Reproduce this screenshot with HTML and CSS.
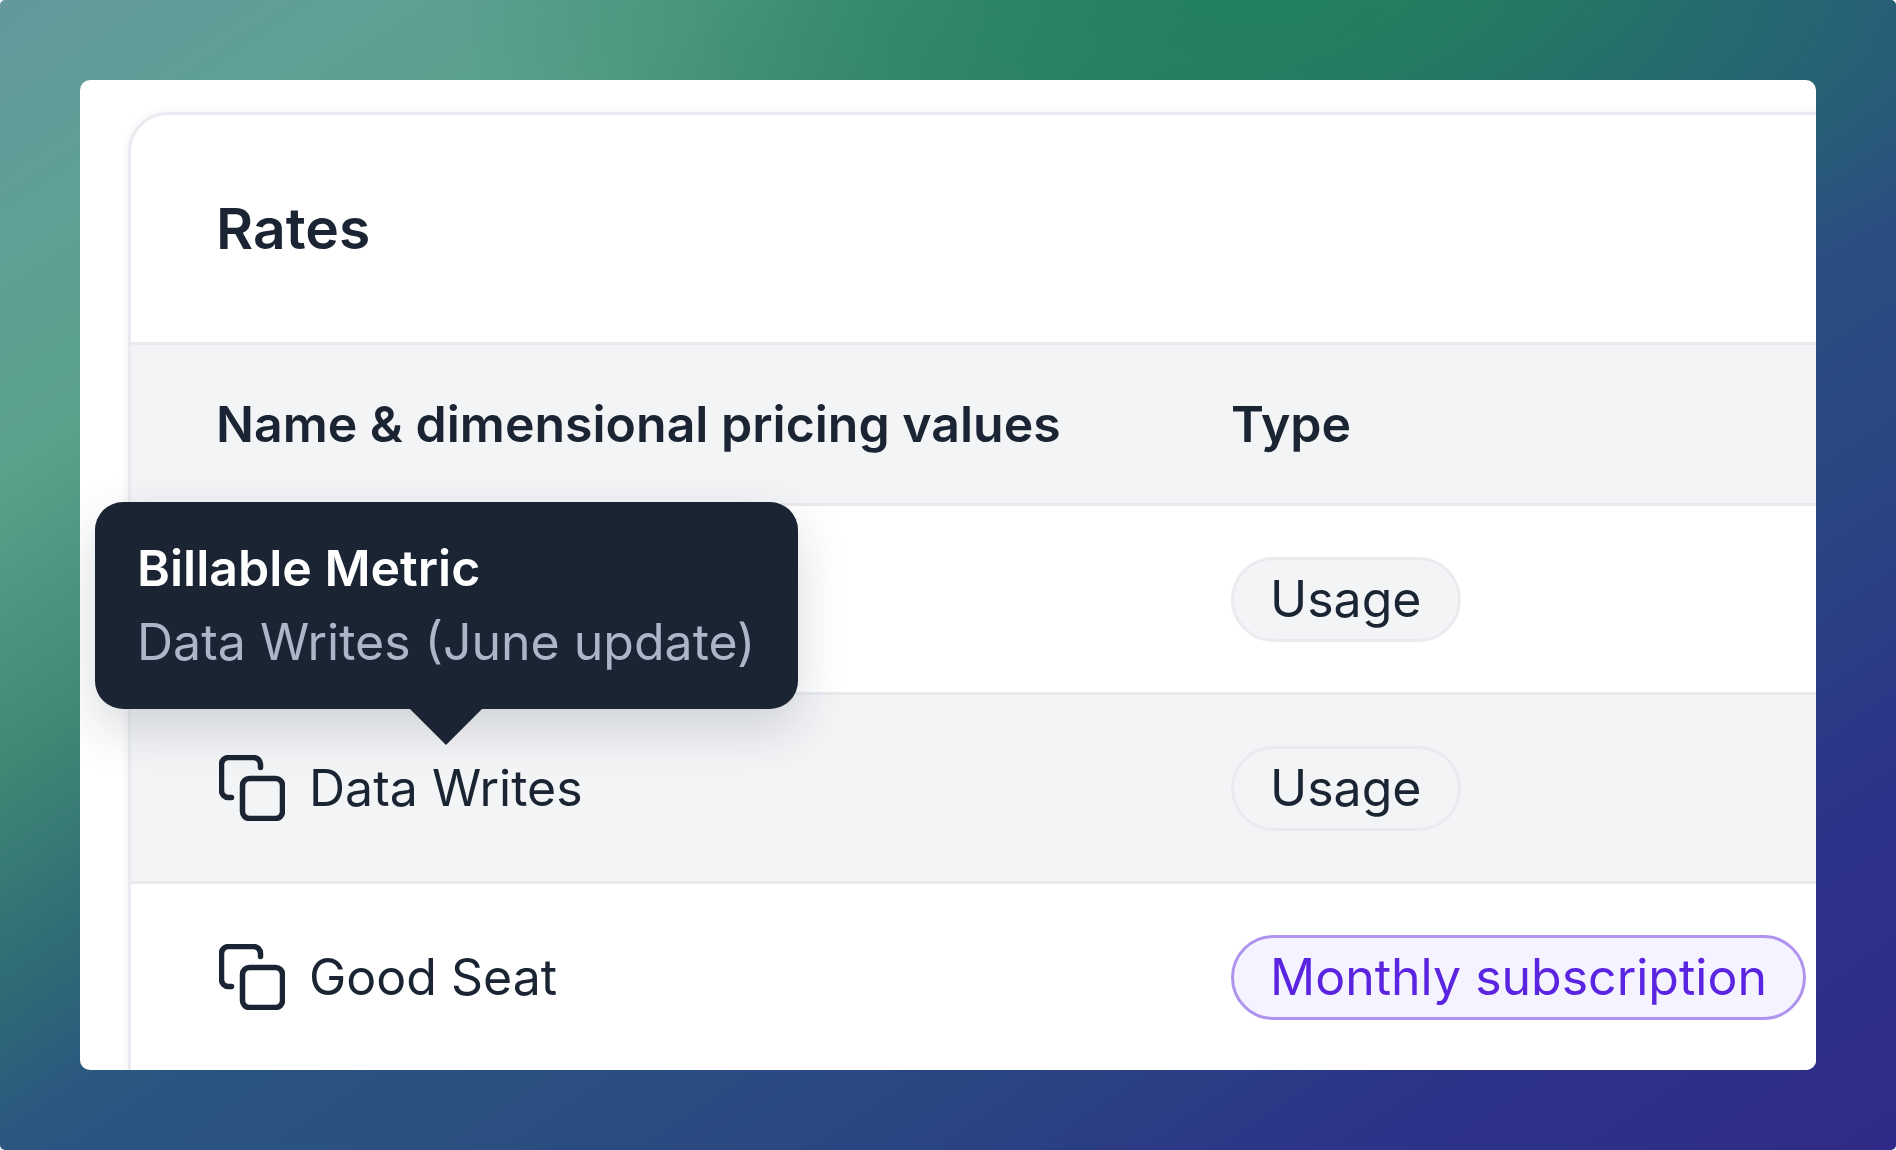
FILE: index.html
```html
<!DOCTYPE html>
<html lang="en">
<head>
<meta charset="utf-8">
<title>Rates</title>
<link rel="stylesheet" href="styles.css">
</head>
<body>
<main class="panel">
  <section class="card">
    <h2 class="card-title">Rates</h2>
    <div class="row row-head">
      <div class="col-name">Name &amp; dimensional pricing values</div>
      <div class="col-type">Type</div>
    </div>
    <div class="row row-body">
      <div class="col-type col-offset"><span class="pill">Usage</span></div>
    </div>
    <div class="row row-body row-alt">
      <div class="col-name name-cell">
        <svg class="icon" viewBox="0 0 66 66" fill="none"><path d="M41.5 12.5v-3a7 7 0 0 0-7-7h-25a7 7 0 0 0-7 7v26a7 7 0 0 0 7 7h3"/><rect x="23.5" y="23.5" width="40" height="40" rx="7"/></svg>
        <span>Data Writes</span>
      </div>
      <div class="col-type"><span class="pill">Usage</span></div>
    </div>
    <div class="row row-body">
      <div class="col-name name-cell">
        <svg class="icon" viewBox="0 0 66 66" fill="none"><path d="M41.5 12.5v-3a7 7 0 0 0-7-7h-25a7 7 0 0 0-7 7v26a7 7 0 0 0 7 7h3"/><rect x="23.5" y="23.5" width="40" height="40" rx="7"/></svg>
        <span>Good Seat</span>
      </div>
      <div class="col-type"><span class="pill pill-purple">Monthly subscription</span></div>
    </div>
  </section>
  <div class="tooltip">
    <div class="tooltip-title">Billable Metric</div>
    <div class="tooltip-sub">Data Writes (June update)</div>
  </div>
</main>
</body>
</html>
```
FILE: styles.css
```css
* { box-sizing: border-box; }
html { margin: 0; height: 100%; background: #fff; }
body {
  margin: 0; width: 1896px; height: 1150px; padding: 80px; overflow: hidden; border-radius: 5px;
  font-family: Inter, "Noto Sans", sans-serif; color: #1a2433;
  background:
    radial-gradient(820px 340px at 1270px 0, rgba(32,128,92,.95) 0%, rgba(32,128,92,.6) 45%, rgba(32,128,92,0) 100%),
    linear-gradient(146deg, #64989c 0%, #5fa096 10%, #5aa08a 20%, #3f8675 32%, #2f6a75 41%, #2a5680 47.3%, #2a4f80 60%, #2a4682 71%, #2c3488 84%, #2f2b88 100%);
}
.panel { position: relative; width: 1736px; height: 990px; background: #fff; border-radius: 10px; overflow: hidden; padding: 32px 0 0 48px; }
.card { width: 1800px; height: 1100px; background: #fff; border: 3px solid #e9ebf0; border-radius: 40px 0 0 0; box-shadow: -1px 0 8px rgba(30,40,60,.06); }
.card-title { margin: 0; height: 227px; padding-left: 85px; display: flex; align-items: center; font-size: 57px; font-weight: 600; }
.row { display: flex; align-items: center; border-bottom: 3px solid #e9ebef; }
.row-head { height: 164px; background: #f3f4f6; border-top: 3px solid #e9ebef; font-size: 50px; font-weight: 600; }
.row-body { height: 189px; font-size: 50px; }
.row-alt { background: #f3f4f6; }
.col-name { width: 1100px; padding-left: 85px; flex: none; }
.col-offset { margin-left: 1100px; }
.name-cell { display: flex; align-items: center; gap: 24px; padding-left: 88px; }
.icon { width: 66px; height: 66px; stroke: #1a2433; stroke-width: 5.5; stroke-linecap: round; stroke-linejoin: round; flex: none; }
.pill { display: inline-block; padding: 9px 36px; line-height: 61px; height: 85px; border: 3px solid #e9ebef; background: #f3f4f6; border-radius: 43px; }
.pill-purple { background: #f5f3ff; border-color: #b093ee; color: #5a24e0; }
.tooltip { position: absolute; left: 15px; top: 422px; width: 703px; height: 207px; background: #1a2433; border-radius: 28px; padding: 31px 42px; box-shadow: 0 20px 50px rgba(20,30,50,.16); }
.tooltip::after { content: ""; position: absolute; left: 315px; top: 100%; border: 36px solid transparent; border-top-color: #1a2433; border-bottom-width: 0; }
.tooltip-title { color: #fff; font-size: 50px; font-weight: 600; line-height: 70px; }
.tooltip-sub { color: #adb6c8; font-size: 50px; line-height: 78px; white-space: nowrap; }
```
